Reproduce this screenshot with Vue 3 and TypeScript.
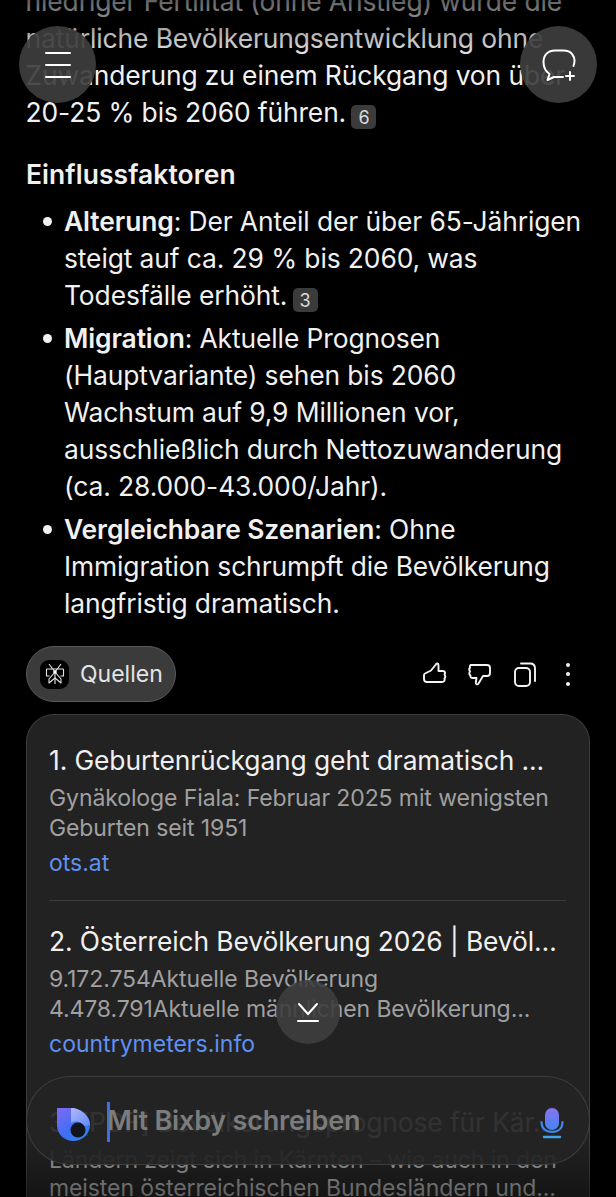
<template>
  <div class="screen">
    <main class="chat">
      <p class="para">
        niedriger Fertilität (ohne Anstieg) würde die natürliche Bevölkerungsentwicklung ohne Zuwanderung zu einem Rückgang von über 20-25 % bis 2060 führen.
        <span class="cite">6</span>
      </p>

      <h2 class="heading">Einflussfaktoren</h2>

      <ul class="factors">
        <li v-for="item in factors" :key="item.title">
          <strong>{{ item.title }}</strong>: {{ item.text }}
          <span v-if="item.cite" class="cite">{{ item.cite }}</span>
        </li>
      </ul>

      <div class="toolbar">
        <button class="sources-chip">
          <span class="chip-logo">
            <svg width="20" height="22" viewBox="0 0 20 22" fill="none" stroke="#e4e4e4" stroke-width="1.100" stroke-linejoin="round">
              <path d="M4 1l6 8 6-8M10 9v12M1.500 6h17M1.500 6v7h3M18.500 6v7h-3" />
              <path d="M10 9l-6 7v4l6-5 6 5v-4z" />
              <circle cx="10" cy="9" r="1.800" fill="#fff" stroke="none" />
            </svg>
          </span>
          <span>Quellen</span>
        </button>
        <div class="actions">
          <svg width="26" height="26" viewBox="0 0 26 26" fill="none" stroke="#f4f4f4" stroke-width="1.900" stroke-linejoin="round" stroke-linecap="round">
            <path d="M4 12.500L10 9.500 14.500 4C15.500 2 17.500 2 17.500 4.500V10H22C24 10 24.500 12 23.500 13.500 24.500 15 24.500 16.500 23.500 17.500 24 19.500 23 21 21 21H6C4 21 3 20 3 18V14C3 13 3.300 12.800 4 12.500Z" />
          </svg>
          <svg width="26" height="26" viewBox="0 0 26 26" fill="none" stroke="#f4f4f4" stroke-width="1.900" stroke-linejoin="round" stroke-linecap="round">
            <path d="M5 4H21C23 4 24 5 24 7V12C24 14 23 15 21 15H17L12.500 22.500C11.500 24 9.500 23.500 9.800 21.500L10.500 17H7C5 17 4 16 4.500 14.500 3 13.500 3 12 4 10.500 3 9 3 7.500 4 6.500 3.800 5 4 4 5 4Z" />
          </svg>
          <svg width="26" height="26" viewBox="0 0 26 26" fill="none" stroke="#f4f4f4" stroke-width="1.900" stroke-linejoin="round" stroke-linecap="round">
            <rect x="4" y="7" width="15" height="18" rx="4" />
            <path d="M10 2.500H19C22 2.500 24 4.500 24 7.500V20" />
          </svg>
          <svg class="more" width="10" height="26" viewBox="0 0 10 26" fill="#f4f4f4">
            <circle cx="5" cy="4" r="2" />
            <circle cx="5" cy="13" r="2" />
            <circle cx="5" cy="23" r="2" />
          </svg>
        </div>
      </div>

      <section class="sources">
        <article v-for="source in sources" :key="source.title" class="source">
          <h3 class="source-title">{{ source.title }}</h3>
          <p class="source-desc">{{ source.desc }}</p>
          <a v-if="source.site" class="source-link">{{ source.site }}</a>
        </article>
      </section>
    </main>

    <div class="fade-top"></div>
    <div class="fade-bottom"></div>

    <button class="float-btn float-btn--menu" aria-label="Menü">
      <svg width="26" height="26" viewBox="0 0 26 26" stroke="#fff" stroke-width="2" stroke-linecap="round">
        <line x1="1" y1="1" x2="25" y2="1" />
        <line x1="1" y1="13" x2="25" y2="13" />
        <line x1="1" y1="25" x2="25" y2="25" />
      </svg>
    </button>
    <button class="float-btn float-btn--new" aria-label="Neuer Chat">
      <svg width="36" height="36" viewBox="0 0 36 36" fill="none" stroke="#fff" stroke-width="2" stroke-linecap="round" stroke-linejoin="round">
        <path d="M32.500 19C34 15 33.500 10 31 7 29 4 26 3.500 22 3.500H14C7 3.500 2.500 8 2.500 15 2.500 21 4 24 8.500 27L6.500 33 13 30H22" />
        <path d="M29 25v8M25 29h8" />
      </svg>
    </button>

    <button class="scroll-btn" aria-label="Nach unten">
      <svg width="24" height="22" viewBox="0 0 24 22" fill="none" stroke="#fff" stroke-width="2" stroke-linecap="round" stroke-linejoin="round">
        <path d="M3 3l9 10 9-10" />
        <line x1="2" y1="20" x2="22" y2="20" />
      </svg>
    </button>

    <div class="composer">
      <svg class="bixby" width="33" height="33" viewBox="0 0 33 33">
        <defs>
          <linearGradient id="bixbyFill" x1="0" y1="0" x2=".8" y2="1">
            <stop offset="0" stop-color="#7f6af6" />
            <stop offset=".6" stop-color="#3f6ef2" />
            <stop offset="1" stop-color="#2f86f2" />
          </linearGradient>
          <linearGradient id="bixbyLobe" x1="0" y1="0" x2="1" y2="1">
            <stop offset="0" stop-color="#b5b8fb" />
            <stop offset="1" stop-color="#5d8cf6" />
          </linearGradient>
        </defs>
        <path d="M0 0H14C24 0 33 8 33 17 33 26 25 33 16.500 33 7 33 0 26 0 17Z" fill="url(#bixbyFill)" />
        <path d="M14 0C24 0 33 8 33 17L27 18C25 14 19 12 14 15Z" fill="url(#bixbyLobe)" />
        <circle cx="21" cy="22" r="7.500" fill="#14141c" />
      </svg>
      <span class="caret"></span>
      <span class="placeholder">Mit Bixby schreiben</span>
      <svg class="mic" width="24" height="32" viewBox="0 0 24 32" fill="none">
        <defs>
          <linearGradient id="micFill" x1="0" y1="0" x2="0" y2="1">
            <stop offset="0" stop-color="#8a72f0" />
            <stop offset="1" stop-color="#3f86f2" />
          </linearGradient>
        </defs>
        <rect x="5" y="1" width="14" height="22" rx="7" fill="url(#micFill)" />
        <path d="M1.500 15c0 6 4 10 10.500 10s10.500-4 10.500-10" stroke="#3f86ea" stroke-width="2.200" stroke-linecap="round" />
        <line x1="4" y1="30" x2="20" y2="30" stroke="#3ea6ea" stroke-width="2.400" stroke-linecap="round" />
      </svg>
    </div>
  </div>
</template>

<script setup lang="ts">
interface Factor {
  title: string
  text: string
  cite?: string
}

interface Source {
  title: string
  desc: string
  site?: string
}

const factors: Factor[] = [
  {
    title: 'Alterung',
    text: 'Der Anteil der über 65-Jährigen steigt auf ca. 29 % bis 2060, was Todesfälle erhöht.',
    cite: '3',
  },
  {
    title: 'Migration',
    text: 'Aktuelle Prognosen (Hauptvariante) sehen bis 2060 Wachstum auf 9,9 Millionen vor, ausschließlich durch Nettozuwanderung (ca. 28.000-43.000/Jahr).',
  },
  {
    title: 'Vergleichbare Szenarien',
    text: 'Ohne Immigration schrumpft die Bevölkerung langfristig dramatisch.',
  },
]

const sources: Source[] = [
  {
    title: '1. Geburtenrückgang geht dramatisch ...',
    desc: 'Gynäkologe Fiala: Februar 2025 mit wenigsten Geburten seit 1951',
    site: 'ots.at',
  },
  {
    title: '2. Österreich Bevölkerung 2026 | Bevölkerungsuhr',
    desc: '9.172.754Aktuelle Bevölkerung 4.478.791Aktuelle männlichen Bevölkerung...',
    site: 'countrymeters.info',
  },
  {
    title: '3. [PDF] Bevölkerungsprognose für Kär...',
    desc: 'Ländern zeigt sich in Kärnten – wie auch in den meisten österreichischen Bundesländern und...',
  },
]
</script>

<style>
html,
body {
  margin: 0;
  background: #000;
}
</style>

<style scoped>
.screen {
  position: relative;
  width: 616px;
  height: 1197px;
  overflow: hidden;
  background: #000;
  color: #f1f1f1;
  font-family: Inter, 'Noto Sans', sans-serif;
}

.chat {
  margin-top: -17px;
  padding: 0 26px;
}

.para,
.factors {
  font-size: 26.400px;
  line-height: 37px;
  letter-spacing: -0.1px;
}

.para {
  margin: 0 0 0 -0.5px;
  width: 540px;
}

.cite {
  display: inline-block;
  width: 25px;
  height: 24px;
  margin-left: -2px;
  border-radius: 5px;
  background: #3b3b3b;
  color: #dcdcdc;
  font-size: 18px;
  line-height: 25px;
  text-align: center;
  vertical-align: -2px;
}

.heading {
  margin: 25px 0 0;
  font-size: 26.400px;
  line-height: 37px;
  font-weight: 600;
  letter-spacing: 0.1px;
}

.factors {
  margin: 10px 0 0 -1px;
  padding: 0 0 0 39px;
  list-style: none;
}

.factors li {
  position: relative;
  margin-bottom: 6px;
  width: 525px;
}

.factors li::before {
  content: '';
  position: absolute;
  top: 14px;
  left: -21px;
  width: 9px;
  height: 9px;
  border-radius: 50%;
  background: #f1f1f1;
}

.factors strong {
  font-weight: 600;
}

.toolbar {
  display: flex;
  align-items: center;
  justify-content: space-between;
  margin-top: 24px;
}

.sources-chip {
  display: flex;
  align-items: center;
  gap: 11px;
  width: 150px;
  height: 56px;
  padding: 0 0 0 13px;
  border: 1px solid #5a5a5a;
  border-radius: 28px;
  background: #3b3b3b;
  color: #e4e4e4;
  font-family: inherit;
  font-size: 23px;
  box-sizing: border-box;
}

.chip-logo {
  display: flex;
  align-items: center;
  justify-content: center;
  width: 29px;
  height: 29px;
  border-radius: 9px;
  background: #000;
}

.actions {
  display: flex;
  align-items: center;
  gap: 19px;
  margin-right: 17px;
}

.more {
  margin-left: 7px;
}

.sources {
  margin-top: 12px;
  padding: 0 23px 0 22px;
  border: 1px solid #3c3c3c;
  border-bottom: 0;
  border-radius: 28px 28px 0 0;
  background: #222223;
}

.source {
  padding: 21px 0 23px;
}

.source:first-child {
  padding: 26px 0 22px;
  border-bottom: 1px solid #3d3d3d;
}

.source-title {
  margin: 0;
  overflow: hidden;
  font-size: 26.400px;
  line-height: 38px;
  font-weight: 400;
  letter-spacing: -0.1px;
  color: #f0f0f0;
  white-space: nowrap;
  text-overflow: ellipsis;
}

.source-desc {
  display: -webkit-box;
  margin: 4px 0 0;
  overflow: hidden;
  font-size: 23px;
  line-height: 30px;
  letter-spacing: -0.1px;
  color: #a0a0a0;
  -webkit-box-orient: vertical;
  -webkit-line-clamp: 2;
}

.source:last-child .source-desc {
  margin-top: 5px;
  line-height: 28px;
}

.source-link {
  display: block;
  margin-top: 5px;
  font-size: 23px;
  line-height: 30px;
  color: #5f90f2;
}

.fade-top {
  position: absolute;
  top: 0;
  left: 0;
  right: 0;
  height: 60px;
  background: linear-gradient(rgba(0, 0, 0, 0.6), rgba(0, 0, 0, 0));
}

.fade-bottom {
  position: absolute;
  left: 0;
  right: 0;
  bottom: 0;
  height: 60px;
  background: linear-gradient(rgba(0, 0, 0, 0), rgba(0, 0, 0, 0.4));
}

.float-btn {
  position: absolute;
  top: 26px;
  display: flex;
  align-items: center;
  justify-content: center;
  width: 77px;
  height: 77px;
  padding: 0;
  border: 0;
  border-radius: 50%;
  background: rgba(62, 62, 62, 0.92);
}

.float-btn--menu {
  left: 19px;
}

.float-btn--new {
  right: 19px;
}

.scroll-btn {
  position: absolute;
  top: 980px;
  left: 276px;
  display: flex;
  align-items: center;
  justify-content: center;
  width: 64px;
  height: 64px;
  padding: 0;
  border: 0;
  border-radius: 50%;
  background: rgba(62, 62, 62, 0.9);
}

.composer {
  position: absolute;
  top: 1076px;
  left: 26px;
  display: flex;
  align-items: center;
  width: 564px;
  height: 89px;
  padding: 0 25px 0 30px;
  border: 1px solid rgba(80, 80, 80, 0.6);
  border-radius: 45px;
  background: rgba(36, 36, 37, 0.93);
  box-sizing: border-box;
}

.bixby {
  flex-shrink: 0;
  margin-top: 7px;
}

.caret {
  flex-shrink: 0;
  width: 3px;
  height: 40px;
  margin: 2px 0 0 17px;
  background: #3c6ff0;
}

.placeholder {
  flex: 1;
  margin-left: -3px;
  font-size: 27px;
  font-weight: 600;
  letter-spacing: -0.2px;
  color: #7c7c7c;
}

.mic {
  flex-shrink: 0;
  margin-top: 5px;
}
</style>
